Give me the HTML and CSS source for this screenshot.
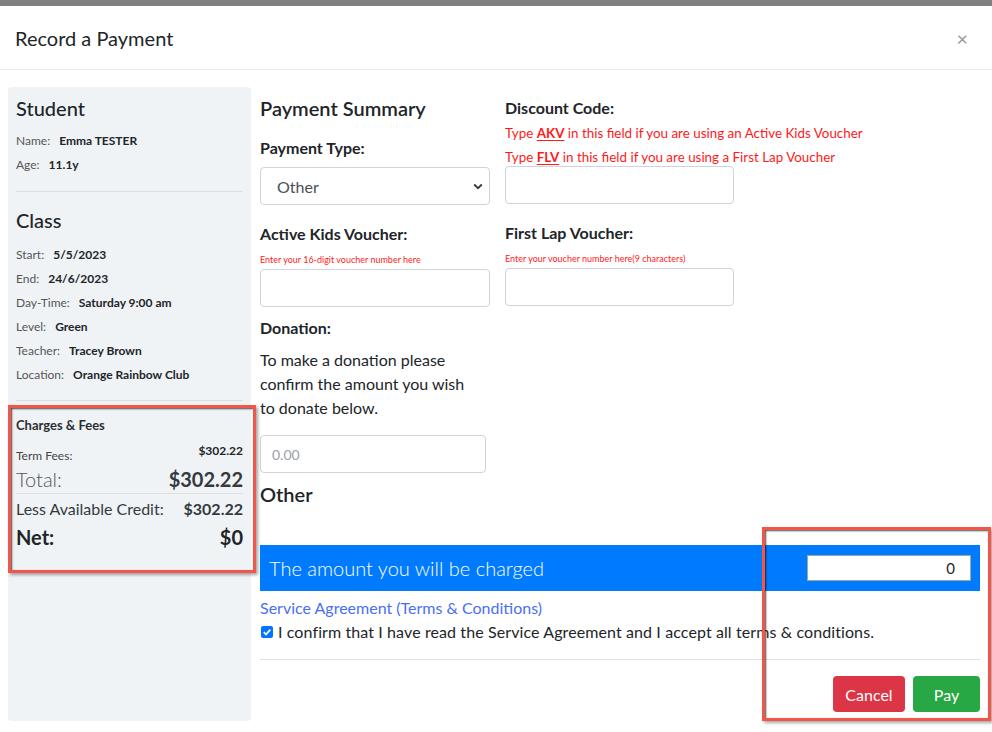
FILE: index.html
```html
<!DOCTYPE html>
<html>
<head>
<meta charset="utf-8">
<link rel="stylesheet" href="styles.css">
</head>
<body>
<div class="topbar"></div>
<header class="modal-header">
  <h1 class="modal-title">Record a Payment</h1>
  <span class="close">×</span>
</header>
<div class="modal-body">
  <aside class="side">
    <h2 class="side-h">Student</h2>
    <div class="info first"><span class="k">Name:</span><b>Emma TESTER</b></div>
    <div class="info"><span class="k">Age:</span><b>11.1y</b></div>
    <hr class="side-hr">
    <h2 class="side-h">Class</h2>
    <div class="info first cls"><span class="k">Start:</span><b>5/5/2023</b></div>
    <div class="info"><span class="k">End:</span><b>24/6/2023</b></div>
    <div class="info"><span class="k">Day-Time:</span><b>Saturday 9:00 am</b></div>
    <div class="info"><span class="k">Level:</span><b>Green</b></div>
    <div class="info"><span class="k">Teacher:</span><b>Tracey Brown</b></div>
    <div class="info"><span class="k">Location:</span><b>Orange Rainbow Club</b></div>
    <hr class="side-hr hr2">
    <div class="charges-title">Charges &amp; Fees</div>
    <div class="row term"><span class="term-k">Term Fees:</span><b>$302.22</b></div>
    <div class="row total"><span class="total-k">Total:</span><b>$302.22</b></div>
    <hr class="side-hr hr3">
    <div class="row credit"><span>Less Available Credit:</span><b>$302.22</b></div>
    <div class="row net"><b>Net:</b><b>$0</b></div>
  </aside>
  <main class="main">
    <div class="cols">
      <div class="col">
        <h2 class="main-h">Payment Summary</h2>
        <div class="label lbl-type">Payment Type:</div>
        <div class="select">
          <span>Other</span>
          <svg width="10" height="7" viewBox="0 0 10 7"><path d="M1.2 1.5 L5 5.2 L8.8 1.5" fill="none" stroke="#343a40" stroke-width="1.8"/></svg>
        </div>
        <div class="label lbl-mid">Active Kids Voucher:</div>
        <div class="hint">Enter your 16-digit voucher number here</div>
        <div class="input"></div>
        <div class="label lbl-don">Donation:</div>
        <p class="para">To make a donation please confirm the amount you wish to donate below.</p>
        <div class="input don-input">0.00</div>
        <h2 class="other">Other</h2>
      </div>
      <div class="col col2">
        <div class="label lbl-disc">Discount Code:</div>
        <div class="red-lines">
          <div>Type <u><b>AKV</b></u> in this field if you are using an Active Kids Voucher</div>
          <div>Type <u><b>FLV</b></u> in this field if you are using a First Lap Voucher</div>
        </div>
        <div class="input disc-input"></div>
        <div class="label lbl-mid">First Lap Voucher:</div>
        <div class="hint">Enter your voucher number here(9 characters)</div>
        <div class="input"></div>
      </div>
    </div>
    <div class="charge-bar">
      <span>The amount you will be charged</span>
      <div class="charge-input">0</div>
    </div>
    <a class="link">Service Agreement (Terms &amp; Conditions)</a>
    <label class="confirm">
      <span class="cb"><svg width="12" height="12" viewBox="0 0 12 12"><rect width="12" height="12" rx="2" fill="#0075ff"/><path d="M2.8 6.2 L5 8.4 L9.3 3.6" fill="none" stroke="#fff" stroke-width="1.8"/></svg></span>
      I confirm that I have read the Service Agreement and I accept all terms &amp; conditions.
    </label>
    <hr class="main-hr">
    <div class="actions">
      <button class="btn btn-cancel">Cancel</button>
      <button class="btn btn-pay">Pay</button>
    </div>
  </main>
</div>
<div class="annot annot1"></div>
<div class="annot annot2"></div>
</body>
</html>
```

FILE: styles.css
```css
* { box-sizing: border-box; }
html, body { margin: 0; padding: 0; background: #fff; }
body {
  font-family: Lato, "Liberation Sans", sans-serif;
  color: #212529;
  width: 992px;
  height: 732px;
  overflow: hidden;
  position: relative;
}
.topbar { height: 6px; background: #808080; }
.modal-header {
  height: 64px;
  border-bottom: 1px solid #e9ecef;
  display: flex;
  align-items: center;
  justify-content: space-between;
  padding: 0 24px 0 15px;
}
.modal-title { margin: 0; font-size: 20px; font-weight: 400; line-height: 24px; color: #212529; }
.close { font-size: 20px; color: #9a9a9a; line-height: 20px; }

.modal-body { display: flex; padding: 17px 12px 0 8px; gap: 9px; }

.side {
  width: 243px;
  height: 634px;
  background: #f0f3f5;
  border-radius: 4px;
  padding: 9px 8px 0 8px;
  flex-shrink: 0;
}
.side-h { margin: 0; font-size: 20px; font-weight: 500; line-height: 24px; color: #212529; }
.info { font-size: 12px; line-height: 24px; display: flex; gap: 9px; }
.info.first { margin-top: 9px; }
.info.cls { margin-top: 11px; }
.info .k { color: #555; }
.info b { font-weight: 700; color: #212529; }
.side-hr { border: 0; border-top: 1px solid #dcdfe2; margin: 14px 0 16px; }
.hr2 { margin: 13px 0 14px; }
.charges-title { font-size: 13px; font-weight: 700; line-height: 20px; color: #2b2f33; }
.row { display: flex; justify-content: space-between; }
.term { margin-top: 6px; font-size: 12px; line-height: 20px; }
.term-k { padding-top: 5px; color: #444; }
.term b { font-weight: 700; }
.total { font-size: 20px; line-height: 26px; }
.total-k { font-weight: 300; color: #555; }
.total b { font-weight: 700; color: #343a40; }
.hr3 { margin: 1px 0 3px; }
.credit { font-size: 16px; line-height: 24px; color: #343a40; }
.credit b { font-weight: 700; }
.net { font-size: 20px; line-height: 28px; color: #212529; margin-top: 2px; }

.main { flex: 1; padding-top: 9px; }
.cols { display: flex; gap: 15px; }
.col { width: 230px; display: flex; flex-direction: column; }
.main-h { margin: 0; font-size: 20px; font-weight: 600; line-height: 24px; color: #212529; }
.label { font-size: 16px; font-weight: 700; line-height: 24px; color: #212529; }
.lbl-type { margin-top: 16px; }
.select {
  margin-top: 7px;
  height: 38px;
  border: 1px solid #ced4da;
  border-radius: 4px;
  display: flex;
  align-items: center;
  justify-content: space-between;
  padding: 0 6px 0 16px;
  font-size: 16px;
  color: #495057;
}
.lbl-mid { margin-top: 17px; }
.hint { margin-top: 8px; font-size: 9px; line-height: 12px; color: #ff1a1a; }
.input {
  margin-top: 3px;
  height: 38px;
  border: 1px solid #ced4da;
  border-radius: 4px;
}
.lbl-don { margin-top: 9px; }
.para { margin: 8px 0 0; font-size: 16px; line-height: 24px; color: #212529; width: 215px; }
.don-input {
  margin-top: 15px;
  width: 226px;
  font-size: 14px;
  color: #9aa0a6;
  padding-left: 11px;
  display: flex;
  align-items: center;
}
.other { margin: 9px 0 0; font-size: 20px; font-weight: 600; line-height: 24px; }
.col2 { width: 229px; }
.lbl-disc { margin-top: 0; }
.red-lines { font-size: 13.4px; line-height: 24px; color: #ff1a1a; margin-top: 1px; white-space: nowrap; }
.red-lines u { text-decoration-thickness: 1px; text-underline-offset: 2px; }
.disc-input { margin-top: -3px; }

.charge-bar {
  margin-top: 39px;
  height: 46px;
  background: #007bff;
  display: flex;
  align-items: center;
  justify-content: space-between;
  padding: 0 9px;
}
.charge-bar span { color: #fff; font-size: 20px; font-weight: 300; }
.charge-input {
  width: 164px;
  height: 26px;
  background: #fff;
  border: 1px solid #9aa;
  text-align: right;
  padding-right: 15px;
  font-size: 15px;
  line-height: 24px;
  color: #212529;
}
.link { display: block; margin-top: 7px; font-size: 16px; line-height: 20px; color: #4a6ff6; }
.confirm { display: flex; align-items: center; gap: 5px; margin-top: 2px; font-size: 16px; line-height: 24px; color: #212529; letter-spacing: 0.1px; }
.cb { display: inline-flex; margin-left: 1px; }
.main-hr { border: 0; border-top: 1px solid #dee2e6; margin: 15px 0 0; }
.actions { display: flex; justify-content: flex-end; gap: 8px; margin-top: 16px; }
.btn {
  height: 36px;
  border: 0;
  border-radius: 4px;
  color: #fff;
  font-family: inherit;
  font-size: 16px;
  padding: 0;
}
.btn-cancel { width: 72px; background: #dc3545; }
.btn-pay { width: 67px; background: #28a745; }

.annot {
  position: absolute;
  border: 3px solid #f2554a;
  box-shadow: inset 1px 1px 2px rgba(0,0,0,0.7), 2px 2px 3px rgba(0,0,0,0.35);
  pointer-events: none;
}
.annot1 { left: 8px; top: 405px; width: 248px; height: 168px; }
.annot2 { left: 762px; top: 527px; width: 229px; height: 194px; }
```
